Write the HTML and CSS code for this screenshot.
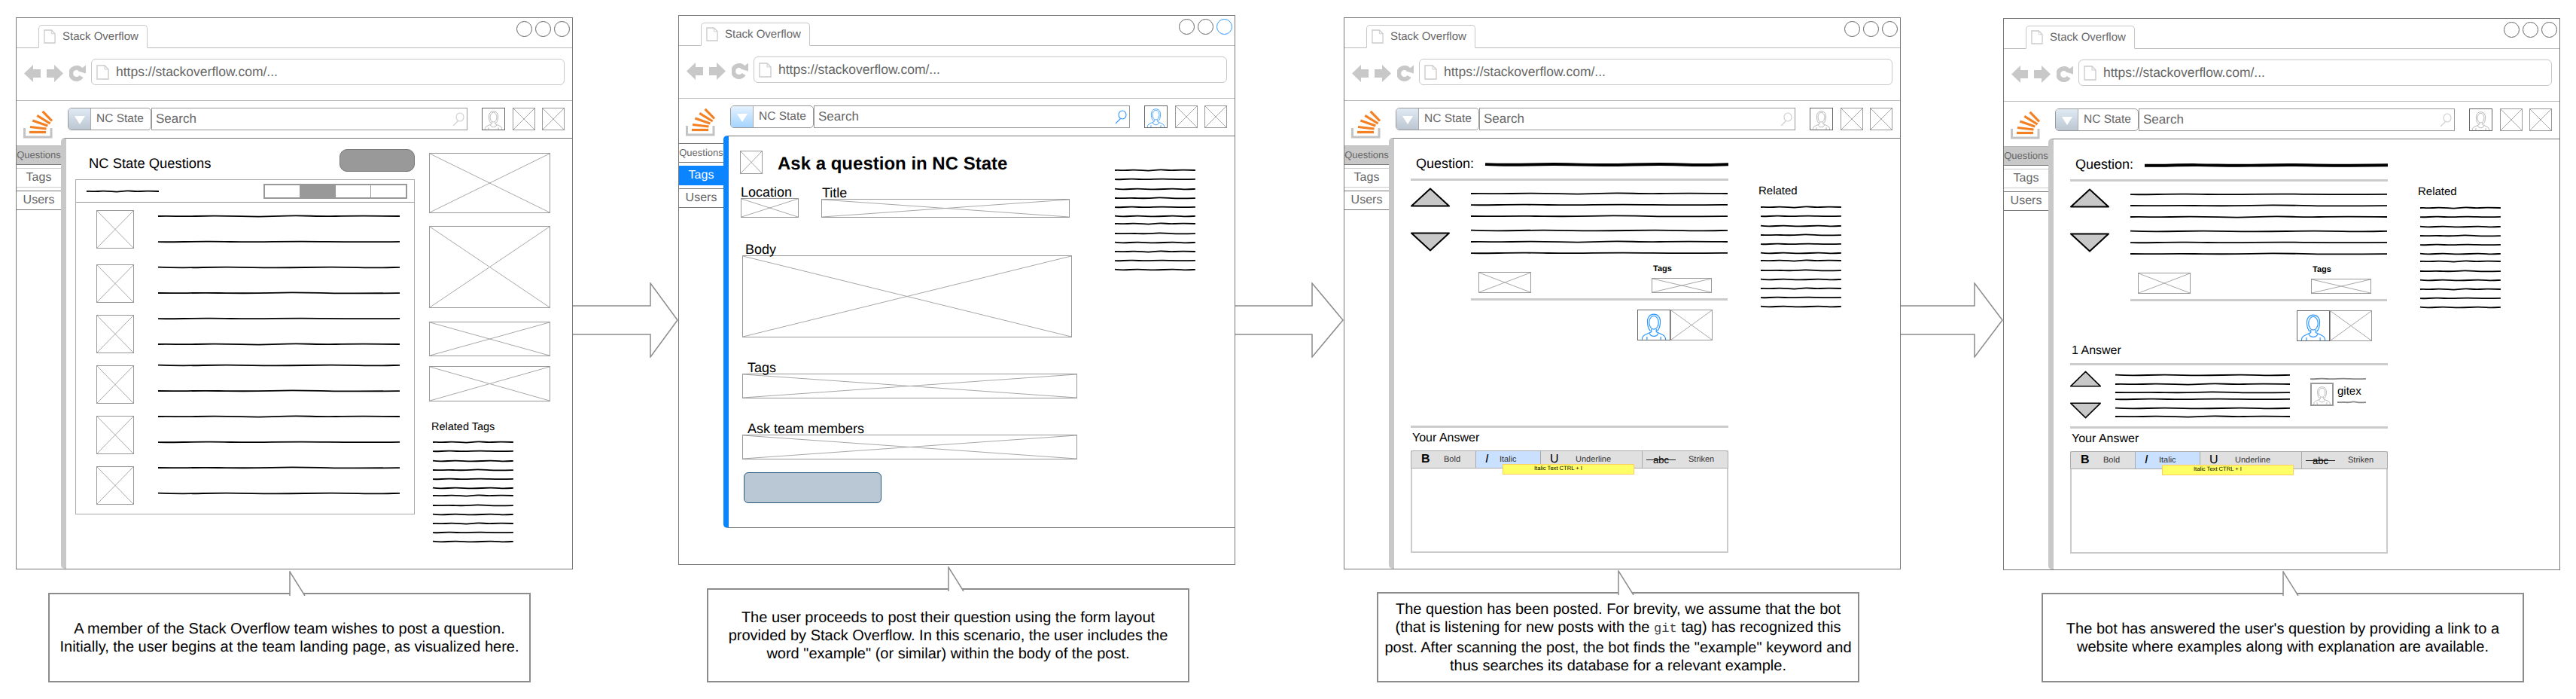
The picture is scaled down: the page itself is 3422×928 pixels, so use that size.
FILE: index.html
```html
<!DOCTYPE html>
<html lang="en">
<head>
    <meta charset="UTF-8">
    <title>Stack Overflow bot storyboard</title>
    <link rel="stylesheet" href="styles.css">
</head>
<body>

<!-- Shared drawings -->
<svg class="defs" xmlns="http://www.w3.org/2000/svg">
    <defs>
        <path id="w1" fill="none" stroke="currentColor" vector-effect="non-scaling-stroke" d="M0 2C20 1.500 30 2.600 50 2S85 1.500 110 2.200S150 2.600 170 1.700S210 2.500 235 2S285 1.600 320 2"/>
        <path id="w2" fill="none" stroke="currentColor" vector-effect="non-scaling-stroke" d="M0 2.200C25 2.600 40 1.500 70 1.700S110 2.500 140 2.100S180 1.400 215 1.800S270 2.600 320 1.800"/>
        <path id="w3" fill="none" stroke="currentColor" vector-effect="non-scaling-stroke" d="M0 1.700C15 2.300 35 2.500 60 2S100 1.500 125 2.100S165 2.600 195 2S245 1.500 265 2.200S300 2.300 320 1.800"/>
        <path id="w4" fill="none" stroke="currentColor" vector-effect="non-scaling-stroke" d="M0 2C30 2.500 45 1.600 80 2S120 2.600 150 1.800S195 1.500 225 2.100S275 2.500 320 2.100"/>
        <g id="tag-lines">
            <use href="#w1" transform="translate(0 0) scale(.334 1)"/>
            <use href="#w2" transform="translate(0 12) scale(.334 1)"/>
            <use href="#w3" transform="translate(0 25) scale(.334 1)"/>
            <use href="#w4" transform="translate(0 37) scale(.334 1)"/>
            <use href="#w2" transform="translate(0 49) scale(.334 1)"/>
            <use href="#w3" transform="translate(0 61) scale(.334 1)"/>
            <use href="#w1" transform="translate(0 71) scale(.334 1)"/>
            <use href="#w4" transform="translate(0 84) scale(.334 1)"/>
            <use href="#w3" transform="translate(0 96) scale(.334 1)"/>
            <use href="#w1" transform="translate(0 108) scale(.334 1)"/>
            <use href="#w2" transform="translate(0 120) scale(.334 1)"/>
            <use href="#w3" transform="translate(0 132) scale(.334 1)"/>
        </g>
        <symbol id="doc" viewBox="0 0 17 20">
            <path d="M1 1H11L16 6V19H1Z" fill="#fff" stroke="#ccc" stroke-width="1.4"/>
            <path d="M11 1V6H16" fill="none" stroke="#ccc"/>
        </symbol>
        <symbol id="person" viewBox="0 0 30 30">
            <g fill="none" stroke="currentColor" stroke-width=".9">
                <ellipse cx="15" cy="12.500" rx="4.800" ry="6.800"/>
                <path d="M8.500 13C7 1 23 1 21.500 13C21.300 17 20 19.500 18.500 21M8.500 13C8.700 17 10 19.500 11.500 21"/>
                <path d="M12.500 19V22L6 25C3.800 26 3 27.500 3 30M17.500 19V22L24 25C26.200 26 27 27.500 27 30"/>
                <path d="M10.500 23.500C12 27.500 18 27.500 19.500 23.500M8 30V27M22 30V27"/>
            </g>
        </symbol>
        <symbol id="vote-up" viewBox="0 0 52 26" preserveAspectRatio="none">
            <path d="M26 1.500L51 24.500H1Z" fill="#c8c8c8" stroke="#000" stroke-width="2" stroke-linejoin="round"/>
        </symbol>
        <symbol id="vote-down" viewBox="0 0 52 26" preserveAspectRatio="none">
            <path d="M1 1.500H51L26 24.500Z" fill="#c8c8c8" stroke="#000" stroke-width="2" stroke-linejoin="round"/>
        </symbol>
        <symbol id="back" viewBox="0 0 22 23"><path d="M0 11.500L12 0V6H22V17H12V23Z" fill="#c8c8c8"/></symbol>
        <symbol id="forward" viewBox="0 0 22 23"><path d="M22 11.500L10 0V6H0V17H10V23Z" fill="#c8c8c8"/></symbol>
        <symbol id="reload" viewBox="0 0 22 22">
            <path d="M16 7A7.500 7.500 0 1 0 16 15" fill="none" stroke="#c8c8c8" stroke-width="6"/>
            <path d="M12 8L22 0V11Z" fill="#c8c8c8"/>
        </symbol>
        <symbol id="loupe" viewBox="0 0 16 18">
            <g fill="none" stroke="currentColor" stroke-width="1.1">
                <ellipse cx="10" cy="6.500" rx="5" ry="5.500"/>
                <path d="M7.500 11.500L1 18"/>
            </g>
        </symbol>
        <symbol id="so-logo" viewBox="0 0 40 37">
            <path d="M1.500 23V35H37V23" fill="none" stroke="#c4c4c4" stroke-width="3"/>
            <g fill="none" stroke="#f48024" stroke-width="3.200">
                <path d="M8 28.500H30"/>
                <path d="M9 21.500L30.500 24"/>
                <path d="M12.300 13L32.300 20"/>
                <path d="M18.300 6.300L35.600 17"/>
                <path d="M25.600 .8L38 13.500"/>
            </g>
        </symbol>
        <symbol id="callout-tip" viewBox="0 0 23 33" preserveAspectRatio="none">
            <path d="M1 33V1L21 33" fill="#fff" stroke="#8c8c8c" stroke-width="1.500"/>
        </symbol>
    </defs>
</svg>

<div class="storyboard">

    <!-- Step 1: team landing page -->
    <section class="step step--one">
        <div class="window">
            <div class="tab-strip">
                <div class="tab"><svg class="doc-icon"><use href="#doc"/></svg>Stack Overflow</div>
                <div class="dots"><span class="dot"></span><span class="dot"></span><span class="dot"></span></div>
            </div>
            <div class="addr-row">
                <svg class="nav-icon"><use href="#back"/></svg>
                <svg class="nav-icon"><use href="#forward"/></svg>
                <svg class="nav-icon nav-icon--reload"><use href="#reload"/></svg>
                <div class="addr-bar"><svg class="doc-icon doc-icon--addr"><use href="#doc"/></svg>https://stackoverflow.com/...</div>
            </div>
            <div class="search-row">
                <svg class="so-logo"><use href="#so-logo"/></svg>
                <div class="team-select"><span class="team-arrow"></span><span class="team-name">NC State</span></div>
                <div class="search-box">Search<svg class="loupe"><use href="#loupe"/></svg></div>
                <div class="avatar avatar--bar"><svg><use href="#person"/></svg></div>
                <div class="ph ph--bar"></div>
                <div class="ph ph--bar"></div>
            </div>
            <div class="body">
                <div class="side">
                    <div class="side-tab side-tab--small side-tab--current">Questions</div>
                    <div class="side-tab side-tab--light">Tags</div>
                    <div class="side-tab">Users</div>
                </div>
                <div class="content landing">
                    <div class="landing-main">
                        <div class="landing-head">
                            <h2 class="page-title">NC State Questions</h2>
                            <div class="ask-btn"></div>
                        </div>
                        <div class="q-list">
                            <div class="q-list-head">
                                <svg class="scribble scribble--head" viewBox="0 0 320 4" preserveAspectRatio="none"><use href="#w1"/></svg>
                                <div class="pager"><span></span><span class="pager-on"></span><span></span><span></span></div>
                            </div>
                            <div class="q-list-body">
                                <div class="thumbs">
                                    <div class="ph thumb"></div>
                                    <div class="ph thumb"></div>
                                    <div class="ph thumb"></div>
                                    <div class="ph thumb"></div>
                                    <div class="ph thumb"></div>
                                    <div class="ph thumb"></div>
                                </div>
                                <div class="q-lines">
                                    <svg class="scribble" viewBox="0 0 320 4" preserveAspectRatio="none"><use href="#w1"/></svg>
                                    <svg class="scribble" viewBox="0 0 320 4" preserveAspectRatio="none"><use href="#w2"/></svg>
                                    <svg class="scribble" viewBox="0 0 320 4" preserveAspectRatio="none"><use href="#w3"/></svg>
                                    <svg class="scribble" viewBox="0 0 320 4" preserveAspectRatio="none"><use href="#w4"/></svg>
                                    <svg class="scribble" viewBox="0 0 320 4" preserveAspectRatio="none"><use href="#w2"/></svg>
                                    <svg class="scribble" viewBox="0 0 320 4" preserveAspectRatio="none"><use href="#w1"/></svg>
                                    <svg class="scribble" viewBox="0 0 320 4" preserveAspectRatio="none"><use href="#w3"/></svg>
                                    <svg class="scribble" viewBox="0 0 320 4" preserveAspectRatio="none"><use href="#w4"/></svg>
                                    <svg class="scribble" viewBox="0 0 320 4" preserveAspectRatio="none"><use href="#w1"/></svg>
                                    <svg class="scribble" viewBox="0 0 320 4" preserveAspectRatio="none"><use href="#w2"/></svg>
                                    <svg class="scribble" viewBox="0 0 320 4" preserveAspectRatio="none"><use href="#w4"/></svg>
                                    <svg class="scribble" viewBox="0 0 320 4" preserveAspectRatio="none"><use href="#w3"/></svg>
                                </div>
                            </div>
                        </div>
                    </div>
                    <div class="landing-rail">
                        <div class="ph rail-a"></div>
                        <div class="ph rail-b"></div>
                        <div class="ph rail-c"></div>
                        <div class="ph rail-d"></div>
                        <div class="rail-title">Related Tags</div>
                        <svg class="tag-stack" viewBox="0 0 107 134"><use href="#tag-lines"/></svg>
                    </div>
                </div>
            </div>
        </div>
        <div class="callout">
            <svg class="callout-tip"><use href="#callout-tip"/></svg>
            <p>A member of the Stack Overflow team wishes to post a question.<br>Initially, the user begins at the team landing page, as visualized here.</p>
        </div>
    </section>

    <svg class="flow-arrow flow-arrow--one" viewBox="0 0 140 100"><path d="M0 31H103V1L139 50L103 99V69H0"/></svg>

    <!-- Step 2: ask a question form -->
    <section class="step step--two">
        <div class="window window--short window--active">
            <div class="tab-strip">
                <div class="tab"><svg class="doc-icon"><use href="#doc"/></svg>Stack Overflow</div>
                <div class="dots"><span class="dot"></span><span class="dot"></span><span class="dot dot--on"></span></div>
            </div>
            <div class="addr-row">
                <svg class="nav-icon"><use href="#back"/></svg>
                <svg class="nav-icon"><use href="#forward"/></svg>
                <svg class="nav-icon nav-icon--reload"><use href="#reload"/></svg>
                <div class="addr-bar"><svg class="doc-icon doc-icon--addr"><use href="#doc"/></svg>https://stackoverflow.com/...</div>
            </div>
            <div class="search-row">
                <svg class="so-logo"><use href="#so-logo"/></svg>
                <div class="team-select"><span class="team-arrow"></span><span class="team-name">NC State</span></div>
                <div class="search-box">Search<svg class="loupe"><use href="#loupe"/></svg></div>
                <div class="avatar avatar--bar"><svg><use href="#person"/></svg></div>
                <div class="ph ph--bar"></div>
                <div class="ph ph--bar"></div>
            </div>
            <div class="body">
                <div class="side">
                    <div class="side-tab side-tab--small">Questions</div>
                    <div class="side-tab side-tab--selected">Tags</div>
                    <div class="side-tab">Users</div>
                </div>
                <div class="content ask">
                    <div class="ask-form">
                        <div class="ask-head">
                            <div class="ph ask-icon"></div>
                            <h2 class="ask-title">Ask a question in NC State</h2>
                        </div>
                        <div class="ask-row">
                            <div class="field field--location">
                                <label class="field-label">Location</label>
                                <div class="ph field-box"></div>
                            </div>
                            <div class="field field--title">
                                <label class="field-label">Title</label>
                                <div class="ph field-box"></div>
                            </div>
                        </div>
                        <div class="field field--body">
                            <label class="field-label">Body</label>
                            <div class="ph field-box"></div>
                        </div>
                        <div class="field field--wide">
                            <label class="field-label">Tags</label>
                            <div class="ph field-box"></div>
                        </div>
                        <div class="field field--wide">
                            <label class="field-label">Ask team members</label>
                            <div class="ph field-box"></div>
                        </div>
                        <div class="post-btn"></div>
                    </div>
                    <svg class="tag-stack tag-stack--ask" viewBox="0 0 107 134"><use href="#tag-lines"/></svg>
                </div>
            </div>
        </div>
        <div class="callout">
            <svg class="callout-tip"><use href="#callout-tip"/></svg>
            <p>The user proceeds to post their question using the form layout<br>provided by Stack Overflow. In this scenario, the user includes the<br>word "example" (or similar) within the body of the post.</p>
        </div>
    </section>

    <svg class="flow-arrow flow-arrow--two" viewBox="0 0 144 100"><path d="M0 31H102V1L143 50L102 99V69H0"/></svg>

    <!-- Step 3: question posted -->
    <section class="step step--three">
        <div class="window">
            <div class="tab-strip">
                <div class="tab"><svg class="doc-icon"><use href="#doc"/></svg>Stack Overflow</div>
                <div class="dots"><span class="dot"></span><span class="dot"></span><span class="dot"></span></div>
            </div>
            <div class="addr-row">
                <svg class="nav-icon"><use href="#back"/></svg>
                <svg class="nav-icon"><use href="#forward"/></svg>
                <svg class="nav-icon nav-icon--reload"><use href="#reload"/></svg>
                <div class="addr-bar"><svg class="doc-icon doc-icon--addr"><use href="#doc"/></svg>https://stackoverflow.com/...</div>
            </div>
            <div class="search-row">
                <svg class="so-logo"><use href="#so-logo"/></svg>
                <div class="team-select"><span class="team-arrow"></span><span class="team-name">NC State</span></div>
                <div class="search-box">Search<svg class="loupe"><use href="#loupe"/></svg></div>
                <div class="avatar avatar--bar"><svg><use href="#person"/></svg></div>
                <div class="ph ph--bar"></div>
                <div class="ph ph--bar"></div>
            </div>
            <div class="body">
                <div class="side">
                    <div class="side-tab side-tab--small side-tab--current">Questions</div>
                    <div class="side-tab side-tab--light">Tags</div>
                    <div class="side-tab">Users</div>
                </div>
                <div class="content thread">
                    <div class="thread-main">
                        <div class="question-row">
                            <h2 class="question-title">Question:</h2>
                            <svg class="scribble scribble--thick" viewBox="0 0 320 4" preserveAspectRatio="none"><use href="#w3"/></svg>
                        </div>
                        <div class="rule"></div>
                        <div class="post-row">
                            <div class="votes">
                                <svg class="vote"><use href="#vote-up"/></svg>
                                <svg class="vote"><use href="#vote-down"/></svg>
                            </div>
                            <div class="post-lines">
                                <svg class="scribble" viewBox="0 0 320 4" preserveAspectRatio="none"><use href="#w1"/></svg>
                                <svg class="scribble" viewBox="0 0 320 4" preserveAspectRatio="none"><use href="#w2"/></svg>
                                <svg class="scribble" viewBox="0 0 320 4" preserveAspectRatio="none"><use href="#w4"/></svg>
                                <svg class="scribble" viewBox="0 0 320 4" preserveAspectRatio="none"><use href="#w3"/></svg>
                                <svg class="scribble" viewBox="0 0 320 4" preserveAspectRatio="none"><use href="#w1"/></svg>
                                <svg class="scribble" viewBox="0 0 320 4" preserveAspectRatio="none"><use href="#w2"/></svg>
                            </div>
                        </div>
                        <div class="post-meta">
                            <div class="ph meta-a"></div>
                            <div class="meta-tags">
                                <div class="meta-label">Tags</div>
                                <div class="ph meta-b"></div>
                            </div>
                        </div>
                        <div class="rule rule--short"></div>
                        <div class="owner">
                            <div class="avatar avatar--owner"><svg><use href="#person"/></svg></div>
                            <div class="ph owner-ph"></div>
                        </div>
                        <div class="answer-form">
                            <div class="rule"></div>
                            <div class="answer-label">Your Answer</div>
                            <div class="editor">
                                <div class="toolbar">
                                    <div class="tb-btn tb-btn--bold"><span class="tb-glyph">B</span>Bold</div>
                                    <div class="tb-btn tb-btn--italic"><span class="tb-glyph">I</span>Italic</div>
                                    <div class="tb-btn tb-btn--under"><span class="tb-glyph">U</span>Underline</div>
                                    <div class="tb-btn tb-btn--strike"><span class="tb-glyph">abc</span>Striken</div>
                                </div>
                                <div class="tooltip">Italic Text CTRL + I</div>
                            </div>
                        </div>
                    </div>
                    <div class="thread-rail">
                        <div class="thread-rail-title">Related</div>
                        <svg class="tag-stack" viewBox="0 0 107 134"><use href="#tag-lines"/></svg>
                    </div>
                </div>
            </div>
        </div>
        <div class="callout">
            <svg class="callout-tip"><use href="#callout-tip"/></svg>
            <p>The question has been posted. For brevity, we assume that the bot<br>(that is listening for new posts with the <code>git</code> tag) has recognized this<br>post. After scanning the post, the bot finds the "example" keyword and<br>thus searches its database for a relevant example.</p>
        </div>
    </section>

    <svg class="flow-arrow flow-arrow--three" viewBox="0 0 136 100"><path d="M0 31H98V1L135 50L98 99V69H0"/></svg>

    <!-- Step 4: bot answer -->
    <section class="step step--four">
        <div class="window">
            <div class="tab-strip">
                <div class="tab"><svg class="doc-icon"><use href="#doc"/></svg>Stack Overflow</div>
                <div class="dots"><span class="dot"></span><span class="dot"></span><span class="dot"></span></div>
            </div>
            <div class="addr-row">
                <svg class="nav-icon"><use href="#back"/></svg>
                <svg class="nav-icon"><use href="#forward"/></svg>
                <svg class="nav-icon nav-icon--reload"><use href="#reload"/></svg>
                <div class="addr-bar"><svg class="doc-icon doc-icon--addr"><use href="#doc"/></svg>https://stackoverflow.com/...</div>
            </div>
            <div class="search-row">
                <svg class="so-logo"><use href="#so-logo"/></svg>
                <div class="team-select"><span class="team-arrow"></span><span class="team-name">NC State</span></div>
                <div class="search-box">Search<svg class="loupe"><use href="#loupe"/></svg></div>
                <div class="avatar avatar--bar"><svg><use href="#person"/></svg></div>
                <div class="ph ph--bar"></div>
                <div class="ph ph--bar"></div>
            </div>
            <div class="body">
                <div class="side">
                    <div class="side-tab side-tab--small side-tab--current">Questions</div>
                    <div class="side-tab side-tab--light">Tags</div>
                    <div class="side-tab">Users</div>
                </div>
                <div class="content thread">
                    <div class="thread-main">
                        <div class="question-row">
                            <h2 class="question-title">Question:</h2>
                            <svg class="scribble scribble--thick" viewBox="0 0 320 4" preserveAspectRatio="none"><use href="#w2"/></svg>
                        </div>
                        <div class="rule"></div>
                        <div class="post-row">
                            <div class="votes">
                                <svg class="vote"><use href="#vote-up"/></svg>
                                <svg class="vote"><use href="#vote-down"/></svg>
                            </div>
                            <div class="post-lines">
                                <svg class="scribble" viewBox="0 0 320 4" preserveAspectRatio="none"><use href="#w2"/></svg>
                                <svg class="scribble" viewBox="0 0 320 4" preserveAspectRatio="none"><use href="#w4"/></svg>
                                <svg class="scribble" viewBox="0 0 320 4" preserveAspectRatio="none"><use href="#w1"/></svg>
                                <svg class="scribble" viewBox="0 0 320 4" preserveAspectRatio="none"><use href="#w3"/></svg>
                                <svg class="scribble" viewBox="0 0 320 4" preserveAspectRatio="none"><use href="#w2"/></svg>
                                <svg class="scribble" viewBox="0 0 320 4" preserveAspectRatio="none"><use href="#w4"/></svg>
                            </div>
                        </div>
                        <div class="post-meta">
                            <div class="ph meta-a"></div>
                            <div class="meta-tags">
                                <div class="meta-label">Tags</div>
                                <div class="ph meta-b"></div>
                            </div>
                        </div>
                        <div class="rule rule--short"></div>
                        <div class="owner">
                            <div class="avatar avatar--owner"><svg><use href="#person"/></svg></div>
                            <div class="ph owner-ph"></div>
                        </div>
                        <div class="answers-label">1 Answer</div>
                        <div class="rule rule--answers"></div>
                        <div class="reply-row">
                            <div class="votes votes--small">
                                <svg class="vote"><use href="#vote-up"/></svg>
                                <svg class="vote"><use href="#vote-down"/></svg>
                            </div>
                            <div class="reply-lines">
                                <svg class="scribble" viewBox="0 0 320 4" preserveAspectRatio="none"><use href="#w3"/></svg>
                                <svg class="scribble" viewBox="0 0 320 4" preserveAspectRatio="none"><use href="#w1"/></svg>
                                <svg class="scribble" viewBox="0 0 320 4" preserveAspectRatio="none"><use href="#w4"/></svg>
                                <svg class="scribble" viewBox="0 0 320 4" preserveAspectRatio="none"><use href="#w2"/></svg>
                                <svg class="scribble" viewBox="0 0 320 4" preserveAspectRatio="none"><use href="#w3"/></svg>
                                <svg class="scribble" viewBox="0 0 320 4" preserveAspectRatio="none"><use href="#w1"/></svg>
                            </div>
                            <div class="reply-card">
                                <svg class="scribble scribble--grey" viewBox="0 0 320 4" preserveAspectRatio="none"><use href="#w2"/></svg>
                                <div class="reply-user">
                                    <div class="avatar avatar--reply"><svg><use href="#person"/></svg></div>
                                    <div class="reply-name">
                                        <span>gitex</span>
                                        <svg class="scribble scribble--grey" viewBox="0 0 320 4" preserveAspectRatio="none"><use href="#w4"/></svg>
                                    </div>
                                </div>
                            </div>
                        </div>
                        <div class="answer-form">
                            <div class="rule"></div>
                            <div class="answer-label">Your Answer</div>
                            <div class="editor">
                                <div class="toolbar">
                                    <div class="tb-btn tb-btn--bold"><span class="tb-glyph">B</span>Bold</div>
                                    <div class="tb-btn tb-btn--italic"><span class="tb-glyph">I</span>Italic</div>
                                    <div class="tb-btn tb-btn--under"><span class="tb-glyph">U</span>Underline</div>
                                    <div class="tb-btn tb-btn--strike"><span class="tb-glyph">abc</span>Striken</div>
                                </div>
                                <div class="tooltip">Italic Text CTRL + I</div>
                            </div>
                        </div>
                    </div>
                    <div class="thread-rail">
                        <div class="thread-rail-title">Related</div>
                        <svg class="tag-stack" viewBox="0 0 107 134"><use href="#tag-lines"/></svg>
                    </div>
                </div>
            </div>
        </div>
        <div class="callout">
            <svg class="callout-tip"><use href="#callout-tip"/></svg>
            <p>The bot has answered the user's question by providing a link to a<br>website where examples along with explanation are available.</p>
        </div>
    </section>

</div>

</body>
</html>
```

FILE: styles.css
```css
/* General */
* {
    box-sizing: border-box;
}

body {
    margin: 0;
    background-color: #fff;
    font-family: "Liberation Sans", Arial, sans-serif;
    color: #000;
    text-rendering: geometricPrecision;
}

.defs {
    display: none;
}

.storyboard {
    display: flex;
    align-items: flex-start;
    padding-left: 21px;
}

/* One column: wireframe window and its caption */
.step {
    display: flex;
    flex-direction: column;
    flex: none;
    width: 740px;
    height: 906px;
}

.step--one { padding-top: 23px; }
.step--two { padding-top: 20px; }
.step--three { padding-top: 23px; }
.step--four { padding-top: 24px; }

.flow-arrow {
    flex: none;
    height: 100px;
    margin-top: 375px;
    fill: #fff;
    stroke: #8c8c8c;
    stroke-width: 1.5;
}

.flow-arrow--one { width: 140px; }
.flow-arrow--two { width: 144px; }
.flow-arrow--three { width: 136px; }

/* Caption */
.callout {
    position: relative;
    display: flex;
    flex: 1;
    align-items: center;
    justify-content: center;
    width: 641px;
    margin-top: 31px;
    margin-left: 43px;
    border: 2px solid #8c8c8c;
    font-size: 20px;
    line-height: 24px;
    text-align: center;
}

.step--two .callout { margin-left: 38px; }
.step--three .callout { margin-top: 30px; margin-left: 44px; }
.step--four .callout { margin-top: 30px; margin-left: 51px; }

.callout p {
    margin: 0;
}

.callout code {
    font-family: "Liberation Mono", monospace;
    font-size: 17px;
    color: #444;
}

.callout-tip {
    position: absolute;
    left: 318px;
    bottom: 100%;
    width: 23px;
    height: 33px;
    margin-bottom: -2px;
}

/* Window */
.window {
    display: flex;
    flex-direction: column;
    flex: none;
    height: 733px;
    border: 1px solid #777;
    background-color: #fff;
}

.window--short {
    height: 730px;
}

.window--short .body {
    flex: none;
    height: 521px;
}

.tab-strip {
    display: flex;
    align-items: flex-start;
    flex: none;
    height: 40px;
    border-bottom: 1px solid #bbb;
}

.tab {
    display: flex;
    align-items: center;
    gap: 9px;
    width: 145px;
    height: 31px;
    margin: 9px 0 0 29px;
    padding-left: 6px;
    border: 1px solid #c8c8c8;
    border-bottom-color: #fff;
    border-radius: 5px 5px 0 0;
    background-color: #fff;
    font-size: 15px;
    color: #666;
}

.doc-icon {
    flex: none;
    width: 16px;
    height: 19px;
}

.dots {
    display: flex;
    gap: 4px;
    margin: 4px 3px 0 auto;
}

.dot {
    width: 21px;
    height: 21px;
    border: 1px solid #666;
    border-radius: 50%;
}

.dot--on {
    border-color: #2a96ff;
}

.addr-row {
    display: flex;
    align-items: flex-start;
    flex: none;
    gap: 8px;
    height: 70px;
    padding: 14px 10px 0;
    border-bottom: 1px solid #bbb;
}

.nav-icon {
    flex: none;
    width: 22px;
    height: 23px;
    margin-top: 8px;
}

.nav-icon--reload {
    margin-right: -1px;
}

.addr-bar {
    display: flex;
    align-items: center;
    flex: 1;
    gap: 9px;
    height: 35px;
    padding-left: 6px;
    border: 1px solid #c8c8c8;
    border-radius: 6px;
    font-size: 17.5px;
    color: #666;
}

.doc-icon--addr {
    width: 17px;
    height: 20px;
}

.search-row {
    display: flex;
    align-items: flex-start;
    flex: none;
    height: 49px;
    padding: 9px 0 0 9px;
}

.so-logo {
    flex: none;
    width: 40px;
    height: 37px;
    margin-top: 4px;
    margin-right: 19px;
}

.team-select {
    display: flex;
    flex: none;
    width: 111px;
    height: 30px;
    border: 1px solid #999;
    border-radius: 5px;
    overflow: hidden;
}

.team-arrow {
    position: relative;
    width: 30px;
    border-right: 1px solid #aaa;
    background: linear-gradient(#dfeaf5, #bcc6d0);
}

.team-arrow::after {
    content: "";
    position: absolute;
    top: 10px;
    left: 8px;
    border-top: 11px solid #fff;
    border-right: 7px solid transparent;
    border-left: 7px solid transparent;
}

.team-name {
    padding-left: 7px;
    font-size: 15.5px;
    line-height: 28px;
    color: #666;
}

.search-box {
    display: flex;
    align-items: center;
    justify-content: space-between;
    flex: none;
    width: 420px;
    height: 30px;
    margin-right: 19px;
    padding: 0 3px 0 5px;
    border: 1px solid #999;
    font-size: 17px;
    color: #666;
}

.loupe {
    width: 16px;
    height: 18px;
    color: #ccc;
}

.avatar {
    flex: none;
    border: 1px solid #666;
    color: #aaa;
}

.avatar svg {
    display: block;
    width: 100%;
    height: 100%;
}

.avatar--bar {
    width: 31px;
    height: 30px;
    margin-right: 10px;
}

.avatar--owner {
    width: 44px;
    height: 41px;
    color: #2a96ff;
}

.avatar--reply {
    width: 31px;
    height: 31px;
    border: 2px solid #999;
}

/* Placeholder box with the two diagonals */
.ph {
    flex: none;
    border: 1px solid #999;
    background: url("data:image/svg+xml,%3Csvg xmlns='http://www.w3.org/2000/svg' viewBox='0 0 100 100' preserveAspectRatio='none'%3E%3Cpath d='M0 0L100 100M100 0L0 100' fill='none' stroke='%23a8a8a8' stroke-width='1' vector-effect='non-scaling-stroke'/%3E%3C/svg%3E") center / 100% 100% no-repeat;
}

.ph--bar {
    width: 30px;
    height: 30px;
    margin-right: 9px;
}

/* Active state of the second window */
.window--active .team-arrow {
    background: linear-gradient(#e4f2ff, #a5d4ff);
}

.window--active .loupe {
    color: #2a96ff;
}

.window--active .avatar--bar {
    color: #2a96ff;
}

/* Sidebar and page area */
.body {
    display: flex;
    flex: 1;
    min-height: 0;
}

.side {
    display: flex;
    flex-direction: column;
    flex: none;
    gap: 4px;
    width: 59px;
    padding-top: 10px;
}

.side-tab {
    height: 26px;
    border-top: 1px solid #777;
    border-bottom: 1px solid #777;
    font-size: 16px;
    line-height: 24px;
    text-align: center;
    color: #666;
}

.side-tab--small {
    font-size: 13px;
    white-space: nowrap;
}

.side-tab--current {
    border-top-color: #bbb;
    background-color: #c8c8c8;
}

.side-tab--light {
    border-color: #ccc;
}

.side-tab--selected {
    border-color: #0a84ff;
    background-color: #0a84ff;
    color: #fff;
}

.content {
    display: flex;
    flex: 1;
    min-width: 0;
    border-top: 1px solid #777;
    border-left: 7px solid #c8c8c8;
    border-radius: 5px 0 0 5px;
}

.window--active .content {
    border-bottom: 1px solid #777;
    border-left-color: #0a84ff;
}

.page-title {
    margin: 0;
    font-size: 18.4px;
    font-weight: normal;
}

.question-title {
    margin: 0;
    font-size: 18px;
    font-weight: normal;
}

.scribble {
    display: block;
    flex: none;
    width: 100%;
    height: 4px;
    overflow: visible;
    stroke-width: 1.8;
    color: #000;
}

.scribble--head {
    width: 96px;
}

.scribble--thick {
    width: 323px;
    height: 5px;
    stroke-width: 4;
}

.scribble--grey {
    color: #888;
}

.tag-stack {
    display: block;
    width: 107px;
    height: 134px;
    overflow: visible;
    stroke-width: 1.8;
    color: #000;
}

/* Step 1 */
.landing-main {
    flex: none;
    width: 451px;
    margin-left: 12px;
}

.landing-head {
    display: flex;
    align-items: center;
    justify-content: space-between;
    height: 30px;
    margin-top: 14px;
    padding-left: 18px;
}

.landing-head .page-title {
    margin-top: 8px;
}

.ask-btn {
    width: 100px;
    height: 30px;
    border: 1px solid #777;
    border-radius: 10px;
    background-color: #999;
}

.q-list {
    height: 445px;
    margin-top: 10px;
    border: 1px solid #aaa;
}

.q-list-head {
    display: flex;
    align-items: center;
    justify-content: space-between;
    height: 30px;
    padding: 0 9px 0 14px;
    border-bottom: 1px solid #999;
}

.pager {
    display: flex;
    width: 191px;
    height: 20px;
    border: 2px solid #999;
}

.pager span {
    flex: 1;
    border-right: 1px solid #999;
}

.pager span:last-child {
    border-right: none;
}

.pager-on {
    background-color: #999;
}

.q-list-body {
    display: flex;
    padding-left: 27px;
}

.thumbs {
    display: flex;
    flex-direction: column;
    flex: none;
    gap: 16px;
    padding-top: 10px;
}

.thumb {
    width: 50px;
    height: 51px;
}

.thumb:first-child {
    margin-bottom: 5px;
}

.q-lines {
    display: flex;
    flex-direction: column;
    flex: none;
    gap: 30px;
    width: 321px;
    margin-left: 32px;
    padding-top: 16px;
}

.q-lines .scribble:nth-child(6) {
    margin-bottom: -6px;
}

.landing-rail {
    flex: none;
    width: 161px;
    margin-left: 19px;
    padding-top: 19px;
}

.rail-a { height: 80px; }
.rail-b { height: 109px; margin-top: 17px; }
.rail-c { height: 46px; margin-top: 18px; }
.rail-d { height: 47px; margin-top: 13px; }

.rail-title {
    margin: 26px 0 10px 3px;
    font-size: 14.5px;
    line-height: 16px;
}

.landing-rail .tag-stack {
    margin-left: 5px;
}

/* Step 2 */
.ask-form {
    flex: none;
    width: 463px;
}

.ask-head {
    display: flex;
    align-items: center;
    gap: 20px;
    height: 31px;
    margin: 19px 0 0 15px;
}

.ask-icon {
    width: 30px;
    height: 31px;
}

.ask-title {
    margin: 4px 0 0;
    font-size: 24px;
    font-weight: bold;
    white-space: nowrap;
}

.ask-row {
    display: flex;
    align-items: flex-end;
    gap: 30px;
    margin: 16px 0 0 16px;
}

.field-label {
    display: block;
    height: 16px;
    font-size: 18px;
    line-height: 16px;
    white-space: nowrap;
}

.field--location { width: 77px; }
.field--location .field-box { height: 26px; }
.field--title { width: 330px; }
.field--title .field-label { padding-left: 1px; }
.field--title .field-box { height: 25px; }

.field--body {
    width: 438px;
    margin: 34px 0 0 18px;
}

.field--body .field-label { padding-left: 4px; }
.field--body .field-box { height: 109px; }

.field--wide {
    width: 445px;
    margin: 32px 0 0 18px;
}

.field--wide .field-label { padding-left: 7px; }
.field--wide .field-box { height: 33px; }

.post-btn {
    width: 183px;
    height: 41px;
    margin: 17px 0 0 20px;
    border: 1px solid #2b5a80;
    border-radius: 6px;
    background-color: #b9c8d4;
}

.tag-stack--ask {
    flex: none;
    margin: 43px 0 0 50px;
}

/* Step 3 and 4 */
.thread-main {
    display: flex;
    flex-direction: column;
    flex: none;
    width: 422px;
    margin-left: 22px;
    padding-bottom: 21px;
}

.question-row {
    display: flex;
    align-items: center;
    gap: 15px;
    height: 22px;
    margin-top: 22px;
    padding-left: 7px;
}

.question-row .scribble--thick {
    margin-top: 2px;
}

.rule {
    flex: none;
    height: 3px;
    margin-top: 9px;
    background-color: #ccc;
}

.rule--short {
    margin: 7px 1px 0 80px;
}

.rule--answers {
    margin-top: 8px;
}

.post-row {
    display: flex;
    margin-top: 9px;
}

.votes {
    display: flex;
    flex-direction: column;
    flex: none;
    gap: 33px;
    width: 52px;
}

.vote {
    width: 52px;
    height: 26px;
}

.votes--small {
    gap: 20px;
    width: 41px;
}

.votes--small .vote {
    width: 41px;
    height: 22px;
}

.post-lines {
    display: flex;
    flex-direction: column;
    flex: none;
    gap: 11px;
    width: 341px;
    margin: 6px 0 0 28px;
}

.post-lines .scribble:nth-child(3) {
    margin-bottom: 4px;
}

.post-meta {
    display: flex;
    align-items: flex-end;
    margin: 13px 0 0 90px;
}

.meta-a {
    width: 70px;
    height: 28px;
}

.meta-tags {
    width: 80px;
    margin-left: 160px;
}

.meta-label {
    margin: 0 0 6px 2px;
    font-size: 11px;
    font-weight: bold;
    line-height: 12px;
}

.meta-b {
    height: 20px;
}

.owner {
    display: flex;
    margin: 12px 0 0 301px;
}

.owner-ph {
    width: 56px;
    height: 41px;
}

.answers-label {
    margin: 5px 0 0 2px;
    font-size: 16px;
    line-height: 16px;
}

.reply-row {
    display: flex;
    margin-top: 7px;
}

.reply-lines {
    display: flex;
    flex-direction: column;
    flex: none;
    gap: 7.5px;
    width: 232px;
    margin: 4px 0 0 19px;
}

.reply-lines .scribble:nth-child(3) {
    margin-bottom: -2.5px;
}

.reply-card {
    flex: none;
    width: 74px;
    margin: 9px 0 0 27px;
}

.reply-user {
    display: flex;
    gap: 5px;
    margin-top: 3px;
}

.reply-name {
    flex: 1;
    padding-top: 3px;
    font-size: 15px;
    line-height: 18px;
}

.reply-name .scribble {
    margin-top: 3px;
}

.answer-form {
    margin-top: auto;
}

.answer-form .rule {
    margin-top: 0;
}

.answer-label {
    margin: 6px 0 8px 2px;
    font-size: 16px;
    line-height: 16px;
}

.editor {
    position: relative;
    height: 136px;
    border: 2px solid #ccc;
    border-top: none;
}

.toolbar {
    display: flex;
    height: 24px;
    margin: 0 -2px;
    border: 1px solid #aaa;
    border-radius: 3px 3px 0 0;
    background-color: #e0e0e0;
}

.tb-btn {
    display: flex;
    align-items: center;
    flex: none;
    border-right: 1px solid #aaa;
    font-size: 11px;
    color: #333;
}

.tb-btn:last-child {
    border-right: none;
}

.tb-glyph {
    font-size: 16px;
    color: #000;
}

.tb-btn--bold { width: 86px; padding-left: 13px; }
.tb-btn--bold .tb-glyph { width: 30px; font-weight: bold; }
.tb-btn--italic { width: 86px; padding-left: 12px; background-color: #c9e0ff; }
.tb-btn--italic .tb-glyph { width: 19px; font-style: italic; }
.tb-btn--under { width: 135px; padding-left: 12px; }
.tb-btn--under .tb-glyph { width: 34px; }
.tb-btn--strike { width: 113px; padding-left: 5px; }

.tb-btn--strike .tb-glyph {
    width: 39px;
    margin-right: 17px;
    background: linear-gradient(#222, #222) center / 100% 1px no-repeat;
    font-size: 13px;
    text-align: center;
}

.tooltip {
    position: absolute;
    top: 18px;
    left: 120px;
    width: 175px;
    height: 14px;
    padding-left: 41px;
    border: 1px solid #ffcc66;
    background-color: #ffff66;
    font-size: 7.6px;
    line-height: 9px;
}

.thread-rail {
    flex: none;
    width: 110px;
    margin-left: 40px;
    padding-top: 62px;
}

.thread-rail-title {
    margin-bottom: 11px;
    font-size: 15px;
    line-height: 16px;
}

.thread-rail .tag-stack {
    margin-left: 3px;
}
```
